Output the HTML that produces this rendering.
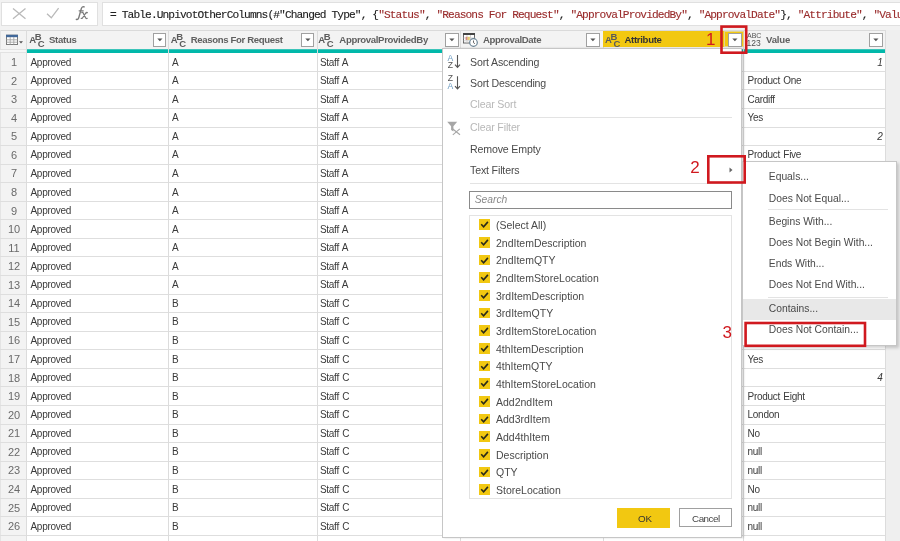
<!DOCTYPE html><html><head><meta charset="utf-8"><style>html,body{margin:0;padding:0}body{width:900px;height:541px;overflow:hidden;position:relative;background:#fff;will-change:transform}</style></head><body><div style="position:absolute;left:0px;top:0px;width:900px;height:30px;background:#f2f2f2;"></div>
<div style="position:absolute;left:1px;top:2px;width:96.5px;height:24px;background:#fff;box-sizing:border-box;border:1px solid #e0e0e0"></div>
<div style="position:absolute;left:102px;top:2px;width:820px;height:24px;background:#fff;box-sizing:border-box;border:1px solid #e0e0e0"></div>
<svg style="position:absolute;left:0;top:0" width="100" height="30"><g stroke="#b9b9b9" stroke-width="1.3" fill="none"><path d="M13 8.5L25.5 18.8M25.5 8.5L13 18.8"/><path d="M47 13.8L51.3 17.8L58.6 8.2"/></g></svg>
<svg style="position:absolute;left:0;top:0" width="100" height="30"><g stroke="#7a7a7a" stroke-width="1.35" fill="none" stroke-linecap="round"><path d="M76.3 19.3Q78 20.2 78.9 17.2L81.2 9Q82 6.1 84.2 6.9"/><path d="M79.2 10.8H83.2"/><path d="M81.8 12.6Q82.6 12 83.3 13.2L85.6 17.8Q86.3 19 87.2 18.3M87.3 12.6Q86.5 12.2 85.5 13.5L82.8 17.5Q82 18.8 81.2 18.3" stroke-width="1.25"/></g></svg>
<div style="position:absolute;left:110.1px;top:9.92px;font:400 11.2px/11.2px 'Liberation Mono',monospace;color:#333;white-space:pre;letter-spacing:-0.887px;-webkit-text-stroke:0.12px"><span style="color:#222">= Table.UnpivotOtherColumns(#&quot;Changed Type&quot;, {</span><span style="color:#9a2c2c">&quot;Status&quot;</span><span style="color:#222">, </span><span style="color:#9a2c2c">&quot;Reasons For Request&quot;</span><span style="color:#222">, </span><span style="color:#9a2c2c">&quot;ApprovalProvidedBy&quot;</span><span style="color:#222">, </span><span style="color:#9a2c2c">&quot;ApprovalDate&quot;</span><span style="color:#222">}, </span><span style="color:#9a2c2c">&quot;Attribute&quot;</span><span style="color:#222">, </span><span style="color:#9a2c2c">&quot;Value&quot;, &quot;Value&quot;)</span></div>
<div style="position:absolute;left:0px;top:30px;width:900px;height:19px;background:#f3f3f3;box-sizing:border-box;border-top:1px solid #dadada"></div>
<div style="position:absolute;left:27px;top:52.8px;width:858.5px;height:488.2px;background:#fff;"></div>
<div style="position:absolute;left:0px;top:52.8px;width:27px;height:488.2px;background:#f3f3f3;"></div>
<div style="position:absolute;left:885.5px;top:30px;width:14.5px;height:511px;background:#efefef;"></div>
<div style="position:absolute;left:0px;top:30px;width:1.2px;height:511px;background:#e4e4e4;"></div>
<div style="position:absolute;left:27px;top:50px;width:858.5px;height:3px;background:#01b8aa;"></div>
<div style="position:absolute;left:27px;top:49px;width:858.5px;height:1px;background:#3cc4b9;"></div>
<div style="position:absolute;left:0px;top:49px;width:27px;height:4px;background:#f6f6f6;"></div>
<div style="position:absolute;left:0px;top:49px;width:27px;height:1px;background:#e2e2e2;"></div>
<div style="position:absolute;left:0px;top:52px;width:27px;height:1px;background:#e2e2e2;"></div>
<div style="position:absolute;left:0px;top:70.86px;width:885.5px;height:1px;background:#dedede;"></div>
<div style="position:absolute;left:0px;top:89.41999999999999px;width:885.5px;height:1px;background:#dedede;"></div>
<div style="position:absolute;left:0px;top:107.97999999999999px;width:885.5px;height:1px;background:#dedede;"></div>
<div style="position:absolute;left:0px;top:126.53999999999999px;width:885.5px;height:1px;background:#dedede;"></div>
<div style="position:absolute;left:0px;top:145.1px;width:885.5px;height:1px;background:#dedede;"></div>
<div style="position:absolute;left:0px;top:163.65999999999997px;width:885.5px;height:1px;background:#dedede;"></div>
<div style="position:absolute;left:0px;top:182.21999999999997px;width:885.5px;height:1px;background:#dedede;"></div>
<div style="position:absolute;left:0px;top:200.77999999999997px;width:885.5px;height:1px;background:#dedede;"></div>
<div style="position:absolute;left:0px;top:219.33999999999997px;width:885.5px;height:1px;background:#dedede;"></div>
<div style="position:absolute;left:0px;top:237.89999999999998px;width:885.5px;height:1px;background:#dedede;"></div>
<div style="position:absolute;left:0px;top:256.46px;width:885.5px;height:1px;background:#dedede;"></div>
<div style="position:absolute;left:0px;top:275.02px;width:885.5px;height:1px;background:#dedede;"></div>
<div style="position:absolute;left:0px;top:293.58px;width:885.5px;height:1px;background:#dedede;"></div>
<div style="position:absolute;left:0px;top:312.14px;width:885.5px;height:1px;background:#dedede;"></div>
<div style="position:absolute;left:0px;top:330.7px;width:885.5px;height:1px;background:#dedede;"></div>
<div style="position:absolute;left:0px;top:349.26px;width:885.5px;height:1px;background:#dedede;"></div>
<div style="position:absolute;left:0px;top:367.82px;width:885.5px;height:1px;background:#dedede;"></div>
<div style="position:absolute;left:0px;top:386.38px;width:885.5px;height:1px;background:#dedede;"></div>
<div style="position:absolute;left:0px;top:404.94px;width:885.5px;height:1px;background:#dedede;"></div>
<div style="position:absolute;left:0px;top:423.5px;width:885.5px;height:1px;background:#dedede;"></div>
<div style="position:absolute;left:0px;top:442.06px;width:885.5px;height:1px;background:#dedede;"></div>
<div style="position:absolute;left:0px;top:460.62px;width:885.5px;height:1px;background:#dedede;"></div>
<div style="position:absolute;left:0px;top:479.18px;width:885.5px;height:1px;background:#dedede;"></div>
<div style="position:absolute;left:0px;top:497.73999999999995px;width:885.5px;height:1px;background:#dedede;"></div>
<div style="position:absolute;left:0px;top:516.3px;width:885.5px;height:1px;background:#dedede;"></div>
<div style="position:absolute;left:0px;top:534.8599999999999px;width:885.5px;height:1px;background:#dedede;"></div>
<div style="position:absolute;left:0px;top:553.42px;width:885.5px;height:1px;background:#dedede;"></div>
<div style="position:absolute;left:26.3px;top:30px;width:1px;height:511px;background:#dcdcdc;"></div>
<div style="position:absolute;left:167.5px;top:30px;width:1px;height:511px;background:#dcdcdc;"></div>
<div style="position:absolute;left:316.5px;top:30px;width:1px;height:511px;background:#dcdcdc;"></div>
<div style="position:absolute;left:460.0px;top:30px;width:1px;height:511px;background:#dcdcdc;"></div>
<div style="position:absolute;left:602.5px;top:30px;width:1px;height:511px;background:#dcdcdc;"></div>
<div style="position:absolute;left:743.0px;top:30px;width:1px;height:511px;background:#dcdcdc;"></div>
<div style="position:absolute;left:885.0px;top:30px;width:1px;height:511px;background:#dcdcdc;"></div>
<div style="position:absolute;left:603px;top:31px;width:141px;height:16.3px;background:#f2c811;"></div>
<svg style="position:absolute;left:5px;top:33px" width="20" height="13"><rect x="1.5" y="2.2" width="11" height="9.3" fill="#fff" stroke="#7a7a7a"/><rect x="1" y="1.8" width="12" height="2.4" fill="#41689a"/><path d="M5.2 4v7.5M8.8 4v7.5M1.5 6.8h11M1.5 9.2h11" stroke="#a5a5a5" stroke-width="0.9"/><path d="M14 8.3h4l-2 2.3z" fill="#555"/></svg>
<div style="position:absolute;left:28.6px;top:33px;width:16px;height:14px;font:700 9.5px/9.5px 'Liberation Sans',sans-serif;color:#5a5a5a"><span style="position:absolute;left:0.6px;top:2.2px">A</span><span style="position:absolute;left:6.2px;top:-1.5px">B</span><span style="position:absolute;left:9.2px;top:5.8px">C</span></div>
<div style="position:absolute;left:49px;top:35.17px;font:700 9.6px/9.6px 'Liberation Sans',sans-serif;color:#606060;white-space:pre;letter-spacing:-0.3px">Status</div>
<div style="position:absolute;left:152.7px;top:33px;width:13.8px;height:13.8px;background:#fff;box-sizing:border-box;border:1px solid #a0a0a0"></div>
<svg style="position:absolute;left:152.7px;top:33px" width="14" height="14"><path d="M4.3 5.6h5.2L6.9 8.3z" fill="#555"/></svg>
<div style="position:absolute;left:170.1px;top:33px;width:16px;height:14px;font:700 9.5px/9.5px 'Liberation Sans',sans-serif;color:#5a5a5a"><span style="position:absolute;left:0.6px;top:2.2px">A</span><span style="position:absolute;left:6.2px;top:-1.5px">B</span><span style="position:absolute;left:9.2px;top:5.8px">C</span></div>
<div style="position:absolute;left:190.7px;top:35.17px;font:700 9.6px/9.6px 'Liberation Sans',sans-serif;color:#606060;white-space:pre;letter-spacing:-0.35px">Reasons For Request</div>
<div style="position:absolute;left:300.7px;top:33px;width:13.8px;height:13.8px;background:#fff;box-sizing:border-box;border:1px solid #a0a0a0"></div>
<svg style="position:absolute;left:300.7px;top:33px" width="14" height="14"><path d="M4.3 5.6h5.2L6.9 8.3z" fill="#555"/></svg>
<div style="position:absolute;left:317.6px;top:33px;width:16px;height:14px;font:700 9.5px/9.5px 'Liberation Sans',sans-serif;color:#5a5a5a"><span style="position:absolute;left:0.6px;top:2.2px">A</span><span style="position:absolute;left:6.2px;top:-1.5px">B</span><span style="position:absolute;left:9.2px;top:5.8px">C</span></div>
<div style="position:absolute;left:339.3px;top:35.17px;font:700 9.6px/9.6px 'Liberation Sans',sans-serif;color:#606060;white-space:pre;letter-spacing:-0.35px">ApprovalProvidedBy</div>
<div style="position:absolute;left:445px;top:33px;width:13.8px;height:13.8px;background:#fff;box-sizing:border-box;border:1px solid #a0a0a0"></div>
<svg style="position:absolute;left:445px;top:33px" width="14" height="14"><path d="M4.3 5.6h5.2L6.9 8.3z" fill="#555"/></svg>
<svg style="position:absolute;left:462px;top:32px" width="18" height="16"><rect x="1.5" y="1.5" width="11" height="9.5" fill="#fff" stroke="#666"/><rect x="1" y="1" width="12" height="2" fill="#444"/><path d="M1.5 6h11M1.5 8.8h11M5 3v8M8.5 3v8" stroke="#c8c8c8" stroke-width="0.8"/><rect x="3.6" y="4.8" width="2" height="3.2" fill="#d48a84"/><rect x="5.6" y="4.8" width="2.2" height="3.2" fill="#e6cf72"/><circle cx="11.5" cy="10.5" r="3.8" fill="#fff" stroke="#6a8394" stroke-width="1.2"/><path d="M11.5 8.5v2.2l1.4 1" stroke="#555" stroke-width="0.9" fill="none"/></svg>
<div style="position:absolute;left:483px;top:35.17px;font:700 9.6px/9.6px 'Liberation Sans',sans-serif;color:#606060;white-space:pre;letter-spacing:-0.35px">ApprovalDate</div>
<div style="position:absolute;left:586px;top:33px;width:13.8px;height:13.8px;background:#fff;box-sizing:border-box;border:1px solid #a0a0a0"></div>
<svg style="position:absolute;left:586px;top:33px" width="14" height="14"><path d="M4.3 5.6h5.2L6.9 8.3z" fill="#555"/></svg>
<div style="position:absolute;left:604.4px;top:33px;width:16px;height:14px;font:700 9.5px/9.5px 'Liberation Sans',sans-serif;color:#5a5a5a"><span style="position:absolute;left:0.6px;top:2.2px">A</span><span style="position:absolute;left:6.2px;top:-1.5px">B</span><span style="position:absolute;left:9.2px;top:5.8px">C</span></div>
<div style="position:absolute;left:624.4px;top:35.17px;font:700 9.6px/9.6px 'Liberation Sans',sans-serif;color:#333;white-space:pre;letter-spacing:-0.3px">Attribute</div>
<div style="position:absolute;left:723.5px;top:30.5px;width:20px;height:16.8px;background:transparent;box-sizing:border-box;border:1.5px solid #e2d48e"></div>
<div style="position:absolute;left:728.2px;top:33px;width:13.8px;height:13.8px;background:#fff;box-sizing:border-box;border:1px solid #a0a0a0"></div>
<svg style="position:absolute;left:728.2px;top:33px" width="14" height="14"><path d="M4.3 5.6h5.2L6.9 8.3z" fill="#555"/></svg>
<div style="position:absolute;left:747px;top:32px;font:400 7px/7px 'Liberation Sans',sans-serif;color:#505050">ABC</div>
<div style="position:absolute;left:746.5px;top:38.5px;font:400 8.5px/8.5px 'Liberation Sans',sans-serif;color:#505050">123</div>
<div style="position:absolute;left:766px;top:35.17px;font:700 9.6px/9.6px 'Liberation Sans',sans-serif;color:#606060;white-space:pre;letter-spacing:-0.2px">Value</div>
<div style="position:absolute;left:869.4px;top:33px;width:13.8px;height:13.8px;background:#fff;box-sizing:border-box;border:1px solid #a0a0a0"></div>
<svg style="position:absolute;left:869.4px;top:33px" width="14" height="14"><path d="M4.3 5.6h5.2L6.9 8.3z" fill="#555"/></svg>
<div style="position:absolute;left:0.5px;top:57.09px;font:400 11px/11px 'Liberation Sans',sans-serif;color:#6a6a6a;white-space:pre;"><span style="display:inline-block;width:27px;text-align:center">1</span></div>
<div style="position:absolute;left:30.5px;top:57.63px;font:400 10px/10px 'Liberation Sans',sans-serif;color:#3a3a3a;white-space:pre;letter-spacing:-0.3px;word-spacing:0.9px">Approved</div>
<div style="position:absolute;left:172px;top:57.63px;font:400 10px/10px 'Liberation Sans',sans-serif;color:#3a3a3a;white-space:pre;letter-spacing:-0.3px;word-spacing:0.9px">A</div>
<div style="position:absolute;left:320px;top:57.63px;font:400 10px/10px 'Liberation Sans',sans-serif;color:#3a3a3a;white-space:pre;letter-spacing:-0.3px;word-spacing:0.9px">Staff A</div>
<div style="position:absolute;left:860.8px;top:57.63px;font:400 10px/10px 'Liberation Sans',sans-serif;color:#3a3a3a;white-space:pre;"><span style="display:inline-block;width:22px;text-align:right"><i>1</i></span></div>
<div style="position:absolute;left:0.5px;top:75.65px;font:400 11px/11px 'Liberation Sans',sans-serif;color:#6a6a6a;white-space:pre;"><span style="display:inline-block;width:27px;text-align:center">2</span></div>
<div style="position:absolute;left:30.5px;top:76.19px;font:400 10px/10px 'Liberation Sans',sans-serif;color:#3a3a3a;white-space:pre;letter-spacing:-0.3px;word-spacing:0.9px">Approved</div>
<div style="position:absolute;left:172px;top:76.19px;font:400 10px/10px 'Liberation Sans',sans-serif;color:#3a3a3a;white-space:pre;letter-spacing:-0.3px;word-spacing:0.9px">A</div>
<div style="position:absolute;left:320px;top:76.19px;font:400 10px/10px 'Liberation Sans',sans-serif;color:#3a3a3a;white-space:pre;letter-spacing:-0.3px;word-spacing:0.9px">Staff A</div>
<div style="position:absolute;left:747.6px;top:76.19px;font:400 10px/10px 'Liberation Sans',sans-serif;color:#3a3a3a;white-space:pre;letter-spacing:-0.3px;word-spacing:0.9px">Product One</div>
<div style="position:absolute;left:0.5px;top:94.21px;font:400 11px/11px 'Liberation Sans',sans-serif;color:#6a6a6a;white-space:pre;"><span style="display:inline-block;width:27px;text-align:center">3</span></div>
<div style="position:absolute;left:30.5px;top:94.75px;font:400 10px/10px 'Liberation Sans',sans-serif;color:#3a3a3a;white-space:pre;letter-spacing:-0.3px;word-spacing:0.9px">Approved</div>
<div style="position:absolute;left:172px;top:94.75px;font:400 10px/10px 'Liberation Sans',sans-serif;color:#3a3a3a;white-space:pre;letter-spacing:-0.3px;word-spacing:0.9px">A</div>
<div style="position:absolute;left:320px;top:94.75px;font:400 10px/10px 'Liberation Sans',sans-serif;color:#3a3a3a;white-space:pre;letter-spacing:-0.3px;word-spacing:0.9px">Staff A</div>
<div style="position:absolute;left:747.6px;top:94.75px;font:400 10px/10px 'Liberation Sans',sans-serif;color:#3a3a3a;white-space:pre;letter-spacing:-0.3px;word-spacing:0.9px">Cardiff</div>
<div style="position:absolute;left:0.5px;top:112.77px;font:400 11px/11px 'Liberation Sans',sans-serif;color:#6a6a6a;white-space:pre;"><span style="display:inline-block;width:27px;text-align:center">4</span></div>
<div style="position:absolute;left:30.5px;top:113.31px;font:400 10px/10px 'Liberation Sans',sans-serif;color:#3a3a3a;white-space:pre;letter-spacing:-0.3px;word-spacing:0.9px">Approved</div>
<div style="position:absolute;left:172px;top:113.31px;font:400 10px/10px 'Liberation Sans',sans-serif;color:#3a3a3a;white-space:pre;letter-spacing:-0.3px;word-spacing:0.9px">A</div>
<div style="position:absolute;left:320px;top:113.31px;font:400 10px/10px 'Liberation Sans',sans-serif;color:#3a3a3a;white-space:pre;letter-spacing:-0.3px;word-spacing:0.9px">Staff A</div>
<div style="position:absolute;left:747.6px;top:113.31px;font:400 10px/10px 'Liberation Sans',sans-serif;color:#3a3a3a;white-space:pre;letter-spacing:-0.3px;word-spacing:0.9px">Yes</div>
<div style="position:absolute;left:0.5px;top:131.33px;font:400 11px/11px 'Liberation Sans',sans-serif;color:#6a6a6a;white-space:pre;"><span style="display:inline-block;width:27px;text-align:center">5</span></div>
<div style="position:absolute;left:30.5px;top:131.87px;font:400 10px/10px 'Liberation Sans',sans-serif;color:#3a3a3a;white-space:pre;letter-spacing:-0.3px;word-spacing:0.9px">Approved</div>
<div style="position:absolute;left:172px;top:131.87px;font:400 10px/10px 'Liberation Sans',sans-serif;color:#3a3a3a;white-space:pre;letter-spacing:-0.3px;word-spacing:0.9px">A</div>
<div style="position:absolute;left:320px;top:131.87px;font:400 10px/10px 'Liberation Sans',sans-serif;color:#3a3a3a;white-space:pre;letter-spacing:-0.3px;word-spacing:0.9px">Staff A</div>
<div style="position:absolute;left:860.8px;top:131.87px;font:400 10px/10px 'Liberation Sans',sans-serif;color:#3a3a3a;white-space:pre;"><span style="display:inline-block;width:22px;text-align:right"><i>2</i></span></div>
<div style="position:absolute;left:0.5px;top:149.89px;font:400 11px/11px 'Liberation Sans',sans-serif;color:#6a6a6a;white-space:pre;"><span style="display:inline-block;width:27px;text-align:center">6</span></div>
<div style="position:absolute;left:30.5px;top:150.43px;font:400 10px/10px 'Liberation Sans',sans-serif;color:#3a3a3a;white-space:pre;letter-spacing:-0.3px;word-spacing:0.9px">Approved</div>
<div style="position:absolute;left:172px;top:150.43px;font:400 10px/10px 'Liberation Sans',sans-serif;color:#3a3a3a;white-space:pre;letter-spacing:-0.3px;word-spacing:0.9px">A</div>
<div style="position:absolute;left:320px;top:150.43px;font:400 10px/10px 'Liberation Sans',sans-serif;color:#3a3a3a;white-space:pre;letter-spacing:-0.3px;word-spacing:0.9px">Staff A</div>
<div style="position:absolute;left:747.6px;top:150.43px;font:400 10px/10px 'Liberation Sans',sans-serif;color:#3a3a3a;white-space:pre;letter-spacing:-0.3px;word-spacing:0.9px">Product Five</div>
<div style="position:absolute;left:0.5px;top:168.45px;font:400 11px/11px 'Liberation Sans',sans-serif;color:#6a6a6a;white-space:pre;"><span style="display:inline-block;width:27px;text-align:center">7</span></div>
<div style="position:absolute;left:30.5px;top:168.99px;font:400 10px/10px 'Liberation Sans',sans-serif;color:#3a3a3a;white-space:pre;letter-spacing:-0.3px;word-spacing:0.9px">Approved</div>
<div style="position:absolute;left:172px;top:168.99px;font:400 10px/10px 'Liberation Sans',sans-serif;color:#3a3a3a;white-space:pre;letter-spacing:-0.3px;word-spacing:0.9px">A</div>
<div style="position:absolute;left:320px;top:168.99px;font:400 10px/10px 'Liberation Sans',sans-serif;color:#3a3a3a;white-space:pre;letter-spacing:-0.3px;word-spacing:0.9px">Staff A</div>
<div style="position:absolute;left:0.5px;top:187.01px;font:400 11px/11px 'Liberation Sans',sans-serif;color:#6a6a6a;white-space:pre;"><span style="display:inline-block;width:27px;text-align:center">8</span></div>
<div style="position:absolute;left:30.5px;top:187.55px;font:400 10px/10px 'Liberation Sans',sans-serif;color:#3a3a3a;white-space:pre;letter-spacing:-0.3px;word-spacing:0.9px">Approved</div>
<div style="position:absolute;left:172px;top:187.55px;font:400 10px/10px 'Liberation Sans',sans-serif;color:#3a3a3a;white-space:pre;letter-spacing:-0.3px;word-spacing:0.9px">A</div>
<div style="position:absolute;left:320px;top:187.55px;font:400 10px/10px 'Liberation Sans',sans-serif;color:#3a3a3a;white-space:pre;letter-spacing:-0.3px;word-spacing:0.9px">Staff A</div>
<div style="position:absolute;left:0.5px;top:205.57px;font:400 11px/11px 'Liberation Sans',sans-serif;color:#6a6a6a;white-space:pre;"><span style="display:inline-block;width:27px;text-align:center">9</span></div>
<div style="position:absolute;left:30.5px;top:206.11px;font:400 10px/10px 'Liberation Sans',sans-serif;color:#3a3a3a;white-space:pre;letter-spacing:-0.3px;word-spacing:0.9px">Approved</div>
<div style="position:absolute;left:172px;top:206.11px;font:400 10px/10px 'Liberation Sans',sans-serif;color:#3a3a3a;white-space:pre;letter-spacing:-0.3px;word-spacing:0.9px">A</div>
<div style="position:absolute;left:320px;top:206.11px;font:400 10px/10px 'Liberation Sans',sans-serif;color:#3a3a3a;white-space:pre;letter-spacing:-0.3px;word-spacing:0.9px">Staff A</div>
<div style="position:absolute;left:0.5px;top:224.13px;font:400 11px/11px 'Liberation Sans',sans-serif;color:#6a6a6a;white-space:pre;"><span style="display:inline-block;width:27px;text-align:center">10</span></div>
<div style="position:absolute;left:30.5px;top:224.67px;font:400 10px/10px 'Liberation Sans',sans-serif;color:#3a3a3a;white-space:pre;letter-spacing:-0.3px;word-spacing:0.9px">Approved</div>
<div style="position:absolute;left:172px;top:224.67px;font:400 10px/10px 'Liberation Sans',sans-serif;color:#3a3a3a;white-space:pre;letter-spacing:-0.3px;word-spacing:0.9px">A</div>
<div style="position:absolute;left:320px;top:224.67px;font:400 10px/10px 'Liberation Sans',sans-serif;color:#3a3a3a;white-space:pre;letter-spacing:-0.3px;word-spacing:0.9px">Staff A</div>
<div style="position:absolute;left:0.5px;top:242.69px;font:400 11px/11px 'Liberation Sans',sans-serif;color:#6a6a6a;white-space:pre;"><span style="display:inline-block;width:27px;text-align:center">11</span></div>
<div style="position:absolute;left:30.5px;top:243.23px;font:400 10px/10px 'Liberation Sans',sans-serif;color:#3a3a3a;white-space:pre;letter-spacing:-0.3px;word-spacing:0.9px">Approved</div>
<div style="position:absolute;left:172px;top:243.23px;font:400 10px/10px 'Liberation Sans',sans-serif;color:#3a3a3a;white-space:pre;letter-spacing:-0.3px;word-spacing:0.9px">A</div>
<div style="position:absolute;left:320px;top:243.23px;font:400 10px/10px 'Liberation Sans',sans-serif;color:#3a3a3a;white-space:pre;letter-spacing:-0.3px;word-spacing:0.9px">Staff A</div>
<div style="position:absolute;left:0.5px;top:261.25px;font:400 11px/11px 'Liberation Sans',sans-serif;color:#6a6a6a;white-space:pre;"><span style="display:inline-block;width:27px;text-align:center">12</span></div>
<div style="position:absolute;left:30.5px;top:261.79px;font:400 10px/10px 'Liberation Sans',sans-serif;color:#3a3a3a;white-space:pre;letter-spacing:-0.3px;word-spacing:0.9px">Approved</div>
<div style="position:absolute;left:172px;top:261.79px;font:400 10px/10px 'Liberation Sans',sans-serif;color:#3a3a3a;white-space:pre;letter-spacing:-0.3px;word-spacing:0.9px">A</div>
<div style="position:absolute;left:320px;top:261.79px;font:400 10px/10px 'Liberation Sans',sans-serif;color:#3a3a3a;white-space:pre;letter-spacing:-0.3px;word-spacing:0.9px">Staff A</div>
<div style="position:absolute;left:0.5px;top:279.81px;font:400 11px/11px 'Liberation Sans',sans-serif;color:#6a6a6a;white-space:pre;"><span style="display:inline-block;width:27px;text-align:center">13</span></div>
<div style="position:absolute;left:30.5px;top:280.35px;font:400 10px/10px 'Liberation Sans',sans-serif;color:#3a3a3a;white-space:pre;letter-spacing:-0.3px;word-spacing:0.9px">Approved</div>
<div style="position:absolute;left:172px;top:280.35px;font:400 10px/10px 'Liberation Sans',sans-serif;color:#3a3a3a;white-space:pre;letter-spacing:-0.3px;word-spacing:0.9px">A</div>
<div style="position:absolute;left:320px;top:280.35px;font:400 10px/10px 'Liberation Sans',sans-serif;color:#3a3a3a;white-space:pre;letter-spacing:-0.3px;word-spacing:0.9px">Staff A</div>
<div style="position:absolute;left:0.5px;top:298.37px;font:400 11px/11px 'Liberation Sans',sans-serif;color:#6a6a6a;white-space:pre;"><span style="display:inline-block;width:27px;text-align:center">14</span></div>
<div style="position:absolute;left:30.5px;top:298.91px;font:400 10px/10px 'Liberation Sans',sans-serif;color:#3a3a3a;white-space:pre;letter-spacing:-0.3px;word-spacing:0.9px">Approved</div>
<div style="position:absolute;left:172px;top:298.91px;font:400 10px/10px 'Liberation Sans',sans-serif;color:#3a3a3a;white-space:pre;letter-spacing:-0.3px;word-spacing:0.9px">B</div>
<div style="position:absolute;left:320px;top:298.91px;font:400 10px/10px 'Liberation Sans',sans-serif;color:#3a3a3a;white-space:pre;letter-spacing:-0.3px;word-spacing:0.9px">Staff C</div>
<div style="position:absolute;left:0.5px;top:316.93px;font:400 11px/11px 'Liberation Sans',sans-serif;color:#6a6a6a;white-space:pre;"><span style="display:inline-block;width:27px;text-align:center">15</span></div>
<div style="position:absolute;left:30.5px;top:317.47px;font:400 10px/10px 'Liberation Sans',sans-serif;color:#3a3a3a;white-space:pre;letter-spacing:-0.3px;word-spacing:0.9px">Approved</div>
<div style="position:absolute;left:172px;top:317.47px;font:400 10px/10px 'Liberation Sans',sans-serif;color:#3a3a3a;white-space:pre;letter-spacing:-0.3px;word-spacing:0.9px">B</div>
<div style="position:absolute;left:320px;top:317.47px;font:400 10px/10px 'Liberation Sans',sans-serif;color:#3a3a3a;white-space:pre;letter-spacing:-0.3px;word-spacing:0.9px">Staff C</div>
<div style="position:absolute;left:0.5px;top:335.49px;font:400 11px/11px 'Liberation Sans',sans-serif;color:#6a6a6a;white-space:pre;"><span style="display:inline-block;width:27px;text-align:center">16</span></div>
<div style="position:absolute;left:30.5px;top:336.03px;font:400 10px/10px 'Liberation Sans',sans-serif;color:#3a3a3a;white-space:pre;letter-spacing:-0.3px;word-spacing:0.9px">Approved</div>
<div style="position:absolute;left:172px;top:336.03px;font:400 10px/10px 'Liberation Sans',sans-serif;color:#3a3a3a;white-space:pre;letter-spacing:-0.3px;word-spacing:0.9px">B</div>
<div style="position:absolute;left:320px;top:336.03px;font:400 10px/10px 'Liberation Sans',sans-serif;color:#3a3a3a;white-space:pre;letter-spacing:-0.3px;word-spacing:0.9px">Staff C</div>
<div style="position:absolute;left:0.5px;top:354.05px;font:400 11px/11px 'Liberation Sans',sans-serif;color:#6a6a6a;white-space:pre;"><span style="display:inline-block;width:27px;text-align:center">17</span></div>
<div style="position:absolute;left:30.5px;top:354.59px;font:400 10px/10px 'Liberation Sans',sans-serif;color:#3a3a3a;white-space:pre;letter-spacing:-0.3px;word-spacing:0.9px">Approved</div>
<div style="position:absolute;left:172px;top:354.59px;font:400 10px/10px 'Liberation Sans',sans-serif;color:#3a3a3a;white-space:pre;letter-spacing:-0.3px;word-spacing:0.9px">B</div>
<div style="position:absolute;left:320px;top:354.59px;font:400 10px/10px 'Liberation Sans',sans-serif;color:#3a3a3a;white-space:pre;letter-spacing:-0.3px;word-spacing:0.9px">Staff C</div>
<div style="position:absolute;left:747.6px;top:354.59px;font:400 10px/10px 'Liberation Sans',sans-serif;color:#3a3a3a;white-space:pre;letter-spacing:-0.3px;word-spacing:0.9px">Yes</div>
<div style="position:absolute;left:0.5px;top:372.61px;font:400 11px/11px 'Liberation Sans',sans-serif;color:#6a6a6a;white-space:pre;"><span style="display:inline-block;width:27px;text-align:center">18</span></div>
<div style="position:absolute;left:30.5px;top:373.15px;font:400 10px/10px 'Liberation Sans',sans-serif;color:#3a3a3a;white-space:pre;letter-spacing:-0.3px;word-spacing:0.9px">Approved</div>
<div style="position:absolute;left:172px;top:373.15px;font:400 10px/10px 'Liberation Sans',sans-serif;color:#3a3a3a;white-space:pre;letter-spacing:-0.3px;word-spacing:0.9px">B</div>
<div style="position:absolute;left:320px;top:373.15px;font:400 10px/10px 'Liberation Sans',sans-serif;color:#3a3a3a;white-space:pre;letter-spacing:-0.3px;word-spacing:0.9px">Staff C</div>
<div style="position:absolute;left:860.8px;top:373.15px;font:400 10px/10px 'Liberation Sans',sans-serif;color:#3a3a3a;white-space:pre;"><span style="display:inline-block;width:22px;text-align:right"><i>4</i></span></div>
<div style="position:absolute;left:0.5px;top:391.17px;font:400 11px/11px 'Liberation Sans',sans-serif;color:#6a6a6a;white-space:pre;"><span style="display:inline-block;width:27px;text-align:center">19</span></div>
<div style="position:absolute;left:30.5px;top:391.71px;font:400 10px/10px 'Liberation Sans',sans-serif;color:#3a3a3a;white-space:pre;letter-spacing:-0.3px;word-spacing:0.9px">Approved</div>
<div style="position:absolute;left:172px;top:391.71px;font:400 10px/10px 'Liberation Sans',sans-serif;color:#3a3a3a;white-space:pre;letter-spacing:-0.3px;word-spacing:0.9px">B</div>
<div style="position:absolute;left:320px;top:391.71px;font:400 10px/10px 'Liberation Sans',sans-serif;color:#3a3a3a;white-space:pre;letter-spacing:-0.3px;word-spacing:0.9px">Staff C</div>
<div style="position:absolute;left:747.6px;top:391.71px;font:400 10px/10px 'Liberation Sans',sans-serif;color:#3a3a3a;white-space:pre;letter-spacing:-0.3px;word-spacing:0.9px">Product Eight</div>
<div style="position:absolute;left:0.5px;top:409.73px;font:400 11px/11px 'Liberation Sans',sans-serif;color:#6a6a6a;white-space:pre;"><span style="display:inline-block;width:27px;text-align:center">20</span></div>
<div style="position:absolute;left:30.5px;top:410.27px;font:400 10px/10px 'Liberation Sans',sans-serif;color:#3a3a3a;white-space:pre;letter-spacing:-0.3px;word-spacing:0.9px">Approved</div>
<div style="position:absolute;left:172px;top:410.27px;font:400 10px/10px 'Liberation Sans',sans-serif;color:#3a3a3a;white-space:pre;letter-spacing:-0.3px;word-spacing:0.9px">B</div>
<div style="position:absolute;left:320px;top:410.27px;font:400 10px/10px 'Liberation Sans',sans-serif;color:#3a3a3a;white-space:pre;letter-spacing:-0.3px;word-spacing:0.9px">Staff C</div>
<div style="position:absolute;left:747.6px;top:410.27px;font:400 10px/10px 'Liberation Sans',sans-serif;color:#3a3a3a;white-space:pre;letter-spacing:-0.3px;word-spacing:0.9px">London</div>
<div style="position:absolute;left:0.5px;top:428.29px;font:400 11px/11px 'Liberation Sans',sans-serif;color:#6a6a6a;white-space:pre;"><span style="display:inline-block;width:27px;text-align:center">21</span></div>
<div style="position:absolute;left:30.5px;top:428.83px;font:400 10px/10px 'Liberation Sans',sans-serif;color:#3a3a3a;white-space:pre;letter-spacing:-0.3px;word-spacing:0.9px">Approved</div>
<div style="position:absolute;left:172px;top:428.83px;font:400 10px/10px 'Liberation Sans',sans-serif;color:#3a3a3a;white-space:pre;letter-spacing:-0.3px;word-spacing:0.9px">B</div>
<div style="position:absolute;left:320px;top:428.83px;font:400 10px/10px 'Liberation Sans',sans-serif;color:#3a3a3a;white-space:pre;letter-spacing:-0.3px;word-spacing:0.9px">Staff C</div>
<div style="position:absolute;left:747.6px;top:428.83px;font:400 10px/10px 'Liberation Sans',sans-serif;color:#3a3a3a;white-space:pre;letter-spacing:-0.3px;word-spacing:0.9px">No</div>
<div style="position:absolute;left:0.5px;top:446.85px;font:400 11px/11px 'Liberation Sans',sans-serif;color:#6a6a6a;white-space:pre;"><span style="display:inline-block;width:27px;text-align:center">22</span></div>
<div style="position:absolute;left:30.5px;top:447.39px;font:400 10px/10px 'Liberation Sans',sans-serif;color:#3a3a3a;white-space:pre;letter-spacing:-0.3px;word-spacing:0.9px">Approved</div>
<div style="position:absolute;left:172px;top:447.39px;font:400 10px/10px 'Liberation Sans',sans-serif;color:#3a3a3a;white-space:pre;letter-spacing:-0.3px;word-spacing:0.9px">B</div>
<div style="position:absolute;left:320px;top:447.39px;font:400 10px/10px 'Liberation Sans',sans-serif;color:#3a3a3a;white-space:pre;letter-spacing:-0.3px;word-spacing:0.9px">Staff C</div>
<div style="position:absolute;left:747.6px;top:447.39px;font:400 10px/10px 'Liberation Sans',sans-serif;color:#3a3a3a;white-space:pre;letter-spacing:-0.3px;word-spacing:0.9px">null</div>
<div style="position:absolute;left:0.5px;top:465.41px;font:400 11px/11px 'Liberation Sans',sans-serif;color:#6a6a6a;white-space:pre;"><span style="display:inline-block;width:27px;text-align:center">23</span></div>
<div style="position:absolute;left:30.5px;top:465.95px;font:400 10px/10px 'Liberation Sans',sans-serif;color:#3a3a3a;white-space:pre;letter-spacing:-0.3px;word-spacing:0.9px">Approved</div>
<div style="position:absolute;left:172px;top:465.95px;font:400 10px/10px 'Liberation Sans',sans-serif;color:#3a3a3a;white-space:pre;letter-spacing:-0.3px;word-spacing:0.9px">B</div>
<div style="position:absolute;left:320px;top:465.95px;font:400 10px/10px 'Liberation Sans',sans-serif;color:#3a3a3a;white-space:pre;letter-spacing:-0.3px;word-spacing:0.9px">Staff C</div>
<div style="position:absolute;left:747.6px;top:465.95px;font:400 10px/10px 'Liberation Sans',sans-serif;color:#3a3a3a;white-space:pre;letter-spacing:-0.3px;word-spacing:0.9px">null</div>
<div style="position:absolute;left:0.5px;top:483.97px;font:400 11px/11px 'Liberation Sans',sans-serif;color:#6a6a6a;white-space:pre;"><span style="display:inline-block;width:27px;text-align:center">24</span></div>
<div style="position:absolute;left:30.5px;top:484.51px;font:400 10px/10px 'Liberation Sans',sans-serif;color:#3a3a3a;white-space:pre;letter-spacing:-0.3px;word-spacing:0.9px">Approved</div>
<div style="position:absolute;left:172px;top:484.51px;font:400 10px/10px 'Liberation Sans',sans-serif;color:#3a3a3a;white-space:pre;letter-spacing:-0.3px;word-spacing:0.9px">B</div>
<div style="position:absolute;left:320px;top:484.51px;font:400 10px/10px 'Liberation Sans',sans-serif;color:#3a3a3a;white-space:pre;letter-spacing:-0.3px;word-spacing:0.9px">Staff C</div>
<div style="position:absolute;left:747.6px;top:484.51px;font:400 10px/10px 'Liberation Sans',sans-serif;color:#3a3a3a;white-space:pre;letter-spacing:-0.3px;word-spacing:0.9px">No</div>
<div style="position:absolute;left:0.5px;top:502.53px;font:400 11px/11px 'Liberation Sans',sans-serif;color:#6a6a6a;white-space:pre;"><span style="display:inline-block;width:27px;text-align:center">25</span></div>
<div style="position:absolute;left:30.5px;top:503.07px;font:400 10px/10px 'Liberation Sans',sans-serif;color:#3a3a3a;white-space:pre;letter-spacing:-0.3px;word-spacing:0.9px">Approved</div>
<div style="position:absolute;left:172px;top:503.07px;font:400 10px/10px 'Liberation Sans',sans-serif;color:#3a3a3a;white-space:pre;letter-spacing:-0.3px;word-spacing:0.9px">B</div>
<div style="position:absolute;left:320px;top:503.07px;font:400 10px/10px 'Liberation Sans',sans-serif;color:#3a3a3a;white-space:pre;letter-spacing:-0.3px;word-spacing:0.9px">Staff C</div>
<div style="position:absolute;left:747.6px;top:503.07px;font:400 10px/10px 'Liberation Sans',sans-serif;color:#3a3a3a;white-space:pre;letter-spacing:-0.3px;word-spacing:0.9px">null</div>
<div style="position:absolute;left:0.5px;top:521.09px;font:400 11px/11px 'Liberation Sans',sans-serif;color:#6a6a6a;white-space:pre;"><span style="display:inline-block;width:27px;text-align:center">26</span></div>
<div style="position:absolute;left:30.5px;top:521.63px;font:400 10px/10px 'Liberation Sans',sans-serif;color:#3a3a3a;white-space:pre;letter-spacing:-0.3px;word-spacing:0.9px">Approved</div>
<div style="position:absolute;left:172px;top:521.63px;font:400 10px/10px 'Liberation Sans',sans-serif;color:#3a3a3a;white-space:pre;letter-spacing:-0.3px;word-spacing:0.9px">B</div>
<div style="position:absolute;left:320px;top:521.63px;font:400 10px/10px 'Liberation Sans',sans-serif;color:#3a3a3a;white-space:pre;letter-spacing:-0.3px;word-spacing:0.9px">Staff C</div>
<div style="position:absolute;left:747.6px;top:521.63px;font:400 10px/10px 'Liberation Sans',sans-serif;color:#3a3a3a;white-space:pre;letter-spacing:-0.3px;word-spacing:0.9px">null</div>
<div style="position:absolute;left:441.8px;top:47.5px;width:300px;height:490px;background:#fff;box-sizing:border-box;border:1px solid #c6c6c6;box-shadow:2px 0px 2px rgba(0,0,0,0.15)"></div>
<svg style="position:absolute;left:446px;top:53px" width="16" height="38"><text x="1.6" y="7.9" font-family="Liberation Sans" font-size="8.6" fill="#6b9ac0">A</text><text x="1.8" y="14.9" font-family="Liberation Sans" font-size="8.6" fill="#555">Z</text><path d="M11.5 2v12.3M9 11.6l2.5 2.8L14 11.6" stroke="#555" stroke-width="1.1" fill="none"/><text x="1.8" y="27.8" font-family="Liberation Sans" font-size="8.6" fill="#555">Z</text><text x="1.6" y="35.7" font-family="Liberation Sans" font-size="8.6" fill="#6b9ac0">A</text><path d="M11.5 23.2v12.6M9 33.1l2.5 2.8L14 33.1" stroke="#555" stroke-width="1.1" fill="none"/></svg>
<div style="position:absolute;left:470px;top:57.02px;font:400 10.6px/10.6px 'Liberation Sans',sans-serif;color:#4a4a4a;white-space:pre;letter-spacing:-0.15px">Sort Ascending</div>
<div style="position:absolute;left:470px;top:78.02px;font:400 10.6px/10.6px 'Liberation Sans',sans-serif;color:#4a4a4a;white-space:pre;letter-spacing:-0.15px">Sort Descending</div>
<div style="position:absolute;left:470px;top:98.62px;font:400 10.6px/10.6px 'Liberation Sans',sans-serif;color:#b8b8b8;white-space:pre;letter-spacing:-0.15px">Clear Sort</div>
<div style="position:absolute;left:469.5px;top:116.8px;width:262px;height:1px;background:#e3e3e3;"></div>
<svg style="position:absolute;left:446px;top:120px" width="16" height="16"><path d="M1.2 1.8h10l-3.8 4.4v5.2l-2.3-1.4V6.2z" fill="#a6a6a6"/><path d="M6.5 8.8l7.5 6M13.8 8.8l-7 6" stroke="#a6a6a6" stroke-width="1.1"/></svg>
<div style="position:absolute;left:470px;top:122.32px;font:400 10.6px/10.6px 'Liberation Sans',sans-serif;color:#b8b8b8;white-space:pre;letter-spacing:-0.15px">Clear Filter</div>
<div style="position:absolute;left:470px;top:144.42px;font:400 10.6px/10.6px 'Liberation Sans',sans-serif;color:#4a4a4a;white-space:pre;letter-spacing:-0.15px">Remove Empty</div>
<div style="position:absolute;left:470px;top:164.82px;font:400 10.6px/10.6px 'Liberation Sans',sans-serif;color:#4a4a4a;white-space:pre;letter-spacing:-0.15px">Text Filters</div>
<svg style="position:absolute;left:728px;top:166px" width="6" height="8"><path d="M1.5 1.5l3 2.5-3 2.5z" fill="#666"/></svg>
<div style="position:absolute;left:469.5px;top:182.8px;width:262px;height:1px;background:#e3e3e3;"></div>
<div style="position:absolute;left:469.3px;top:190.7px;width:262.3px;height:18.8px;background:#fff;box-sizing:border-box;border:1px solid #8a8a8a"></div>
<div style="position:absolute;left:474.7px;top:195.28px;font:400 10.3px/10.3px 'Liberation Sans',sans-serif;color:#8a8a8a;white-space:pre;"><i>Search</i></div>
<div style="position:absolute;left:469.3px;top:214.5px;width:262.3px;height:284px;background:#fff;box-sizing:border-box;border:1px solid #e3e3e3"></div>
<div style="position:absolute;left:479.2px;top:219.4px;width:10.5px;height:10.5px;background:#f2c811;"></div>
<svg style="position:absolute;left:479.2px;top:219.40px" width="11" height="11"><path d="M2.2 5.2l2.4 2.5 4.3-4.8" stroke="#2a2a1a" stroke-width="1.6" fill="none"/></svg>
<div style="position:absolute;left:496px;top:220.01px;font:400 10.5px/10.5px 'Liberation Sans',sans-serif;color:#4a4a4a;white-space:pre;">(Select All)</div>
<div style="position:absolute;left:479.2px;top:237.07px;width:10.5px;height:10.5px;background:#f2c811;"></div>
<svg style="position:absolute;left:479.2px;top:237.07px" width="11" height="11"><path d="M2.2 5.2l2.4 2.5 4.3-4.8" stroke="#2a2a1a" stroke-width="1.6" fill="none"/></svg>
<div style="position:absolute;left:496px;top:237.68px;font:400 10.5px/10.5px 'Liberation Sans',sans-serif;color:#4a4a4a;white-space:pre;">2ndItemDescription</div>
<div style="position:absolute;left:479.2px;top:254.74px;width:10.5px;height:10.5px;background:#f2c811;"></div>
<svg style="position:absolute;left:479.2px;top:254.74px" width="11" height="11"><path d="M2.2 5.2l2.4 2.5 4.3-4.8" stroke="#2a2a1a" stroke-width="1.6" fill="none"/></svg>
<div style="position:absolute;left:496px;top:255.35px;font:400 10.5px/10.5px 'Liberation Sans',sans-serif;color:#4a4a4a;white-space:pre;">2ndItemQTY</div>
<div style="position:absolute;left:479.2px;top:272.41px;width:10.5px;height:10.5px;background:#f2c811;"></div>
<svg style="position:absolute;left:479.2px;top:272.41px" width="11" height="11"><path d="M2.2 5.2l2.4 2.5 4.3-4.8" stroke="#2a2a1a" stroke-width="1.6" fill="none"/></svg>
<div style="position:absolute;left:496px;top:273.02px;font:400 10.5px/10.5px 'Liberation Sans',sans-serif;color:#4a4a4a;white-space:pre;">2ndItemStoreLocation</div>
<div style="position:absolute;left:479.2px;top:290.08000000000004px;width:10.5px;height:10.5px;background:#f2c811;"></div>
<svg style="position:absolute;left:479.2px;top:290.08px" width="11" height="11"><path d="M2.2 5.2l2.4 2.5 4.3-4.8" stroke="#2a2a1a" stroke-width="1.6" fill="none"/></svg>
<div style="position:absolute;left:496px;top:290.69px;font:400 10.5px/10.5px 'Liberation Sans',sans-serif;color:#4a4a4a;white-space:pre;">3rdItemDescription</div>
<div style="position:absolute;left:479.2px;top:307.75px;width:10.5px;height:10.5px;background:#f2c811;"></div>
<svg style="position:absolute;left:479.2px;top:307.75px" width="11" height="11"><path d="M2.2 5.2l2.4 2.5 4.3-4.8" stroke="#2a2a1a" stroke-width="1.6" fill="none"/></svg>
<div style="position:absolute;left:496px;top:308.36px;font:400 10.5px/10.5px 'Liberation Sans',sans-serif;color:#4a4a4a;white-space:pre;">3rdItemQTY</div>
<div style="position:absolute;left:479.2px;top:325.42px;width:10.5px;height:10.5px;background:#f2c811;"></div>
<svg style="position:absolute;left:479.2px;top:325.42px" width="11" height="11"><path d="M2.2 5.2l2.4 2.5 4.3-4.8" stroke="#2a2a1a" stroke-width="1.6" fill="none"/></svg>
<div style="position:absolute;left:496px;top:326.03px;font:400 10.5px/10.5px 'Liberation Sans',sans-serif;color:#4a4a4a;white-space:pre;">3rdItemStoreLocation</div>
<div style="position:absolute;left:479.2px;top:343.09000000000003px;width:10.5px;height:10.5px;background:#f2c811;"></div>
<svg style="position:absolute;left:479.2px;top:343.09px" width="11" height="11"><path d="M2.2 5.2l2.4 2.5 4.3-4.8" stroke="#2a2a1a" stroke-width="1.6" fill="none"/></svg>
<div style="position:absolute;left:496px;top:343.70px;font:400 10.5px/10.5px 'Liberation Sans',sans-serif;color:#4a4a4a;white-space:pre;">4thItemDescription</div>
<div style="position:absolute;left:479.2px;top:360.76px;width:10.5px;height:10.5px;background:#f2c811;"></div>
<svg style="position:absolute;left:479.2px;top:360.76px" width="11" height="11"><path d="M2.2 5.2l2.4 2.5 4.3-4.8" stroke="#2a2a1a" stroke-width="1.6" fill="none"/></svg>
<div style="position:absolute;left:496px;top:361.37px;font:400 10.5px/10.5px 'Liberation Sans',sans-serif;color:#4a4a4a;white-space:pre;">4thItemQTY</div>
<div style="position:absolute;left:479.2px;top:378.43000000000006px;width:10.5px;height:10.5px;background:#f2c811;"></div>
<svg style="position:absolute;left:479.2px;top:378.43px" width="11" height="11"><path d="M2.2 5.2l2.4 2.5 4.3-4.8" stroke="#2a2a1a" stroke-width="1.6" fill="none"/></svg>
<div style="position:absolute;left:496px;top:379.04px;font:400 10.5px/10.5px 'Liberation Sans',sans-serif;color:#4a4a4a;white-space:pre;">4thItemStoreLocation</div>
<div style="position:absolute;left:479.2px;top:396.1px;width:10.5px;height:10.5px;background:#f2c811;"></div>
<svg style="position:absolute;left:479.2px;top:396.10px" width="11" height="11"><path d="M2.2 5.2l2.4 2.5 4.3-4.8" stroke="#2a2a1a" stroke-width="1.6" fill="none"/></svg>
<div style="position:absolute;left:496px;top:396.71px;font:400 10.5px/10.5px 'Liberation Sans',sans-serif;color:#4a4a4a;white-space:pre;">Add2ndItem</div>
<div style="position:absolute;left:479.2px;top:413.77px;width:10.5px;height:10.5px;background:#f2c811;"></div>
<svg style="position:absolute;left:479.2px;top:413.77px" width="11" height="11"><path d="M2.2 5.2l2.4 2.5 4.3-4.8" stroke="#2a2a1a" stroke-width="1.6" fill="none"/></svg>
<div style="position:absolute;left:496px;top:414.38px;font:400 10.5px/10.5px 'Liberation Sans',sans-serif;color:#4a4a4a;white-space:pre;">Add3rdItem</div>
<div style="position:absolute;left:479.2px;top:431.44000000000005px;width:10.5px;height:10.5px;background:#f2c811;"></div>
<svg style="position:absolute;left:479.2px;top:431.44px" width="11" height="11"><path d="M2.2 5.2l2.4 2.5 4.3-4.8" stroke="#2a2a1a" stroke-width="1.6" fill="none"/></svg>
<div style="position:absolute;left:496px;top:432.05px;font:400 10.5px/10.5px 'Liberation Sans',sans-serif;color:#4a4a4a;white-space:pre;">Add4thItem</div>
<div style="position:absolute;left:479.2px;top:449.11px;width:10.5px;height:10.5px;background:#f2c811;"></div>
<svg style="position:absolute;left:479.2px;top:449.11px" width="11" height="11"><path d="M2.2 5.2l2.4 2.5 4.3-4.8" stroke="#2a2a1a" stroke-width="1.6" fill="none"/></svg>
<div style="position:absolute;left:496px;top:449.72px;font:400 10.5px/10.5px 'Liberation Sans',sans-serif;color:#4a4a4a;white-space:pre;">Description</div>
<div style="position:absolute;left:479.2px;top:466.78000000000003px;width:10.5px;height:10.5px;background:#f2c811;"></div>
<svg style="position:absolute;left:479.2px;top:466.78px" width="11" height="11"><path d="M2.2 5.2l2.4 2.5 4.3-4.8" stroke="#2a2a1a" stroke-width="1.6" fill="none"/></svg>
<div style="position:absolute;left:496px;top:467.39px;font:400 10.5px/10.5px 'Liberation Sans',sans-serif;color:#4a4a4a;white-space:pre;">QTY</div>
<div style="position:absolute;left:479.2px;top:484.45000000000005px;width:10.5px;height:10.5px;background:#f2c811;"></div>
<svg style="position:absolute;left:479.2px;top:484.45px" width="11" height="11"><path d="M2.2 5.2l2.4 2.5 4.3-4.8" stroke="#2a2a1a" stroke-width="1.6" fill="none"/></svg>
<div style="position:absolute;left:496px;top:485.06px;font:400 10.5px/10.5px 'Liberation Sans',sans-serif;color:#4a4a4a;white-space:pre;">StoreLocation</div>
<div style="position:absolute;left:617px;top:508px;width:53px;height:19.5px;background:#f2c811;"></div>
<div style="position:absolute;left:638px;top:514.20px;font:400 9.8px/9.8px 'Liberation Sans',sans-serif;color:#333;white-space:pre;">OK</div>
<div style="position:absolute;left:679px;top:508.3px;width:53px;height:19.2px;background:#fff;box-sizing:border-box;border:1px solid #a0a0a0"></div>
<div style="position:absolute;left:692px;top:514.20px;font:400 9.8px/9.8px 'Liberation Sans',sans-serif;color:#444;white-space:pre;letter-spacing:-0.45px">Cancel</div>
<div style="position:absolute;left:741.8px;top:161.3px;width:155px;height:184.5px;background:#fff;box-sizing:border-box;border:1px solid #c6c6c6;box-shadow:2px 2px 3px rgba(0,0,0,0.18)"></div>
<div style="position:absolute;left:742.5px;top:299px;width:153.5px;height:20.5px;background:#e8e8e8;"></div>
<div style="position:absolute;left:768.8px;top:172.08px;font:400 10.3px/10.3px 'Liberation Sans',sans-serif;color:#4a4a4a;white-space:pre;">Equals...</div>
<div style="position:absolute;left:768.8px;top:193.58px;font:400 10.3px/10.3px 'Liberation Sans',sans-serif;color:#4a4a4a;white-space:pre;">Does Not Equal...</div>
<div style="position:absolute;left:768.8px;top:216.88px;font:400 10.3px/10.3px 'Liberation Sans',sans-serif;color:#4a4a4a;white-space:pre;">Begins With...</div>
<div style="position:absolute;left:768.8px;top:237.88px;font:400 10.3px/10.3px 'Liberation Sans',sans-serif;color:#4a4a4a;white-space:pre;">Does Not Begin With...</div>
<div style="position:absolute;left:768.8px;top:258.68px;font:400 10.3px/10.3px 'Liberation Sans',sans-serif;color:#4a4a4a;white-space:pre;">Ends With...</div>
<div style="position:absolute;left:768.8px;top:280.38px;font:400 10.3px/10.3px 'Liberation Sans',sans-serif;color:#4a4a4a;white-space:pre;">Does Not End With...</div>
<div style="position:absolute;left:768.8px;top:304.38px;font:400 10.3px/10.3px 'Liberation Sans',sans-serif;color:#4a4a4a;white-space:pre;">Contains...</div>
<div style="position:absolute;left:768.8px;top:325.28px;font:400 10.3px/10.3px 'Liberation Sans',sans-serif;color:#4a4a4a;white-space:pre;">Does Not Contain...</div>
<div style="position:absolute;left:768px;top:209px;width:120px;height:1px;background:#e3e3e3;"></div>
<div style="position:absolute;left:768px;top:297px;width:120px;height:1px;background:#e3e3e3;"></div>
<svg style="position:absolute;left:0;top:0" width="900" height="541"><rect x="721.50" y="26.60" width="24.70" height="26.10" fill="none" stroke="#d0191f" stroke-width="2.6"/></svg>
<div style="position:absolute;left:706px;top:31.01px;font:400 17px/17px 'Liberation Sans',sans-serif;color:#d0191f;white-space:pre;">1</div>
<svg style="position:absolute;left:0;top:0" width="900" height="541"><rect x="708.30" y="156.30" width="36.40" height="26.20" fill="none" stroke="#d0191f" stroke-width="2.6"/></svg>
<div style="position:absolute;left:690.2px;top:159.41px;font:400 17px/17px 'Liberation Sans',sans-serif;color:#d0191f;white-space:pre;">2</div>
<svg style="position:absolute;left:0;top:0" width="900" height="541"><rect x="745.60" y="323.00" width="119.40" height="22.80" fill="none" stroke="#d0191f" stroke-width="2.6"/></svg>
<div style="position:absolute;left:722.4px;top:323.81px;font:400 17px/17px 'Liberation Sans',sans-serif;color:#d0191f;white-space:pre;">3</div></body></html>
